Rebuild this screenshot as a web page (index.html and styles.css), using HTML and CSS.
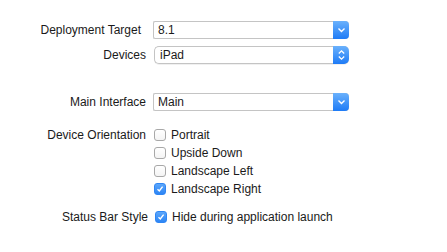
FILE: index.html
```html
<!DOCTYPE html>
<html lang="en">
<head>
  <meta charset="utf-8">
  <title>Deployment Info</title>
  <link rel="stylesheet" href="styles.css">
</head>
<body>
  <div class="form">
    <div class="row row-target">
      <span class="label label-target">Deployment Target</span>
      <div class="combo">
        <span class="combo-value">8.1</span>
        <span class="combo-button">
          <svg width="9" height="6" viewBox="0 0 9 6"><path d="M1.5 1.5 L4.5 4.5 L7.5 1.5" fill="none" stroke="#fff" stroke-width="1.4"/></svg>
        </span>
      </div>
    </div>
    <div class="row row-devices">
      <span class="label">Devices</span>
      <div class="popup">
        <span class="combo-value popup-value">iPad</span>
        <span class="combo-button">
          <svg width="9" height="12" viewBox="0 0 9 12"><path d="M1.8 4.5 L4.5 1.8 L7.2 4.5 M1.8 7.5 L4.5 10.2 L7.2 7.5" fill="none" stroke="#fff" stroke-width="1.3"/></svg>
        </span>
      </div>
    </div>
    <div class="row row-main">
      <span class="label">Main Interface</span>
      <div class="combo">
        <span class="combo-value">Main</span>
        <span class="combo-button">
          <svg width="9" height="6" viewBox="0 0 9 6"><path d="M1.5 1.5 L4.5 4.5 L7.5 1.5" fill="none" stroke="#fff" stroke-width="1.4"/></svg>
        </span>
      </div>
    </div>
    <div class="row row-orientation">
      <span class="label">Device Orientation</span>
      <div class="checks">
        <label class="check"><span class="box"></span>Portrait</label>
        <label class="check"><span class="box"></span>Upside Down</label>
        <label class="check"><span class="box"></span>Landscape Left</label>
        <label class="check"><span class="box box-on"><svg width="8" height="8" viewBox="0 0 8 8"><path d="M1.5 4.2 L3.3 6 L6.6 1.6" fill="none" stroke="#fff" stroke-width="1.4"/></svg></span>Landscape Right</label>
      </div>
    </div>
    <div class="row row-status">
      <span class="label label-status">Status Bar Style</span>
      <div class="checks">
        <label class="check check-status"><span class="box box-on"><svg width="8" height="8" viewBox="0 0 8 8"><path d="M1.5 4.2 L3.3 6 L6.6 1.6" fill="none" stroke="#fff" stroke-width="1.4"/></svg></span>Hide during application launch</label>
      </div>
    </div>
  </div>
</body>
</html>
```

FILE: styles.css
```css
*, *::before, *::after {
  margin: 0;
  padding: 0;
  box-sizing: border-box;
}

body {
  background-color: #FFFFFF;
  color: #1A1A1A;
  font-size: 12px;
  font-family: "Liberation Sans", Arial, sans-serif;
}

.form {
  padding-top: 21px;
}

.row {
  display: flex;
  align-items: flex-start;
}

.label {
  width: 146px;
  flex-shrink: 0;
  height: 18px;
  line-height: 18px;
  text-align: right;
  white-space: nowrap;
}

.label-target {
  padding-right: 5px;
}

.label-status {
  overflow: hidden;
  width: 148px;
}

.row-devices {
  margin-top: 7px;
}

.row-main {
  margin-top: 29px;
}

.row-orientation {
  margin-top: 15px;
}

.row-status {
  margin-top: 10px;
}

.combo,
.popup {
  display: flex;
  width: 196px;
  height: 18px;
  margin-left: 7px;
  border: 1px solid #C4C4C4;
  border-right: none;
  border-radius: 2px 4px 4px 2px;
  background-color: #FFFFFF;
}

.popup {
  height: 18px;
  margin-left: 8px;
  width: 195px;
  border-radius: 5px;
  box-shadow: 0 1px 0 rgba(0, 0, 0, 0.06);
}

.combo-value {
  flex: 1;
  padding-left: 4px;
  line-height: 16px;
}

.popup-value {
  padding-left: 5px;
}

.combo-button {
  display: flex;
  align-items: center;
  justify-content: center;
  width: 16px;
  margin: -1px 0;
  border-radius: 0 4px 4px 0;
  background: linear-gradient(#6AB1FC, #1E7BF6);
}

.popup .combo-button {
  border-radius: 0 5px 5px 0;
}

.checks {
  display: flex;
  flex-direction: column;
  margin-left: 8px;
}

.check {
  display: flex;
  align-items: center;
  height: 18px;
}

.check-status {
  margin-left: -1px;
}

.box {
  display: flex;
  align-items: center;
  justify-content: center;
  width: 12px;
  height: 12px;
  margin-right: 5px;
  border: 1px solid #A8A8A8;
  border-radius: 3px;
  background: linear-gradient(#FFFFFF, #F4F4F4);
}

.box-on {
  border-color: #2F86F4;
  background: linear-gradient(#5CA7FB, #2C85F5);
}
```
